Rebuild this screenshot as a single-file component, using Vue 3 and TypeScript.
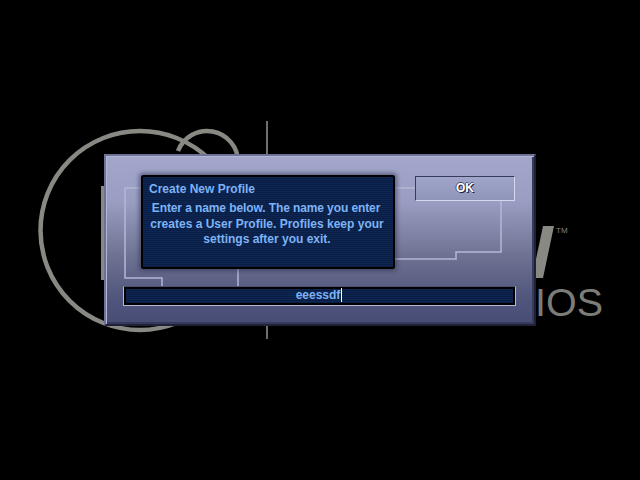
<script setup lang="ts">
const title = 'Create New Profile'
const lines = [
  'Enter a name below. The name you enter',
  'creates a User Profile. Profiles keep your',
  'settings after you exit.',
]
const value = 'eeessdf'
</script>

<template>
  <main class="screen">
    <svg class="logo" width="640" height="480" viewBox="0 0 640 480" aria-hidden="true">
      <g fill="none" stroke="#888983" stroke-width="4.5">
        <circle cx="140" cy="230.500" r="99.500" />
        <path d="M178 151 A31 31 0 0 1 238 162" />
      </g>
      <rect x="266" y="121" width="2" height="218" fill="#6f6f6b" />
      <rect x="101" y="186" width="3" height="94" fill="#888983" />
      <polygon points="543,226 554,226 543,278 532,278" fill="#888983" />
    </svg>
    <span class="tm">TM</span>
    <span class="ios">IOS</span>

    <section class="dialog">
      <svg class="wires" width="432" height="172" viewBox="0 0 432 172" aria-hidden="true">
        <g fill="none" stroke="#b4b8d4" stroke-width="1.500">
          <path d="M38 34 H21 V124 H58 V132" />
          <path d="M134 115 V132" />
          <path d="M291 34 H312" />
          <path d="M397 47 V98 H352 V105 H291" />
        </g>
      </svg>
      <div class="top">
        <div class="panel">
          <h1>{{ title }}</h1>
          <p v-for="line in lines" :key="line">{{ line }}</p>
        </div>
        <button class="ok" type="button">OK</button>
      </div>
      <div class="field"><span>{{ value }}</span><i class="caret"></i></div>
    </section>
  </main>
</template>

<style>
html, body { margin: 0; background: #000; }
</style>

<style scoped>
.screen {
  position: relative;
  width: 640px;
  height: 480px;
  background: #000;
  overflow: hidden;
  display: flex;
  align-items: center;
  justify-content: center;
  font-family: "Liberation Sans", Arial, sans-serif;
}
.logo { position: absolute; left: 0; top: 0; }
.tm {
  position: absolute;
  left: 556px;
  top: 226px;
  font-size: 8px;
  line-height: 9px;
  color: #85857f;
}
.ios {
  position: absolute;
  left: 535px;
  top: 279px;
  font-size: 39.500px;
  line-height: 46px;
  color: #7c7c78;
}
.dialog {
  position: relative;
  box-sizing: border-box;
  width: 432px;
  height: 172px;
  padding: 21px 19px 18px 17px;
  display: flex;
  flex-direction: column;
  justify-content: space-between;
  border: 2px solid;
  border-color: #6d7194 #1f2138 #1f2138 #6d7194;
  background: linear-gradient(180deg, #a2a7cb 0%, #989dc1 28%, #6d7191 60%, #50557c 85%, #484d76 100%);
  box-shadow: inset 1px 1px 0 #b2b6d6, inset -2px -2px 0 #373a5a;
}
.wires { position: absolute; left: -2px; top: -2px; }
.top {
  position: relative;
  display: flex;
  align-items: flex-start;
  justify-content: space-between;
  padding-left: 18px;
  margin: -2px 0 0;
}
.panel {
  box-sizing: border-box;
  width: 254px;
  height: 94px;
  padding: 5px 6px;
  border: 2px solid #000;
  border-radius: 2px;
  color: #7db3f5;
  background: repeating-linear-gradient(180deg, #0d2654 0 1px, #0a1d42 1px 2px);
  box-shadow: 0 0 4px 2px rgba(40, 44, 72, 0.55);
  font-weight: 700;
  font-size: 12px;
  line-height: 15px;
  text-align: center;
}
h1 {
  margin: 0 0 4px;
  font: inherit;
  text-align: left;
}
p {
  margin: 0 0 0 -2px;
  white-space: nowrap;
}
p:first-of-type {
  margin-left: -4px;
  margin-bottom: 1px;
  letter-spacing: -0.1px;
}
.ok {
  box-sizing: border-box;
  width: 100px;
  height: 25px;
  margin-top: 1px;
  padding: 0;
  border: 1px solid;
  border-color: #383c5c #d5d8ea #d5d8ea #383c5c;
  background: linear-gradient(180deg, #a0a5c9, #8f94b9);
  color: #fff;
  font: 700 12px/23px "Liberation Sans", Arial, sans-serif;
  text-shadow: 1px 1px 0 #20233c, -1px 0 0 #4a4e70, 0 -1px 0 #4a4e70;
}
.field {
  position: relative;
  box-sizing: border-box;
  width: 393px;
  height: 20px;
  padding: 0 1px 2px 0;
  border: 1px solid #b4b8d4;
  border-top-color: #4c5076;
  box-shadow: inset 0 0 0 2px #000;
  display: flex;
  align-items: center;
  justify-content: center;
  color: #7db3f5;
  background: repeating-linear-gradient(180deg, #0d2654 0 1px, #0a1d42 1px 2px);
  font-weight: 700;
  font-size: 12px;
}
.caret {
  width: 1px;
  height: 14px;
  margin-left: 1px;
  background: #fff;
}
</style>
